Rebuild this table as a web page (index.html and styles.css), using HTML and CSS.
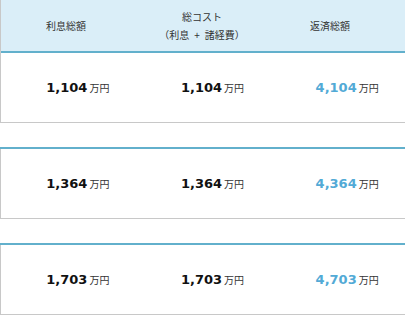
FILE: index.html
```html
<!DOCTYPE html>
<html lang="ja">
<head>
<meta charset="utf-8">
<link rel="stylesheet" href="styles.css">
</head>
<body>
<div class="wrap">
  <div class="block first">
    <div class="head">
      <div class="hcell">利息総額</div>
      <div class="hcell">総コスト<br>（利息<span class="plus">+</span>諸経費）</div>
      <div class="hcell">返済総額</div>
    </div>
    <div class="row">
      <div class="cell"><span class="num">1,104</span><span class="unit">万円</span></div>
      <div class="cell"><span class="num">1,104</span><span class="unit">万円</span></div>
      <div class="cell"><span class="num blue">4,104</span><span class="unit">万円</span></div>
    </div>
  </div>
  <div class="block">
    <div class="row">
      <div class="cell"><span class="num">1,364</span><span class="unit">万円</span></div>
      <div class="cell"><span class="num">1,364</span><span class="unit">万円</span></div>
      <div class="cell"><span class="num blue">4,364</span><span class="unit">万円</span></div>
    </div>
  </div>
  <div class="block">
    <div class="row">
      <div class="cell"><span class="num">1,703</span><span class="unit">万円</span></div>
      <div class="cell"><span class="num">1,703</span><span class="unit">万円</span></div>
      <div class="cell"><span class="num blue">4,703</span><span class="unit">万円</span></div>
    </div>
  </div>
</div>
</body>
</html>
```
FILE: styles.css
```css
html, body {
  margin: 0;
  padding: 0;
  background: #fff;
}
body {
  font-family: "Noto Sans CJK JP", "DejaVu Sans", sans-serif;
  color: #333;
}
.wrap {
  width: 405px;
  display: flex;
  flex-direction: column;
  gap: 24px;
}
.block {
  border-left: 1px solid #c8c8c8;
  border-bottom: 1px solid #c8c8c8;
}
.head {
  height: 51px;
  background: #daeef8;
  display: grid;
  grid-template-columns: 130px 142px 114px;
  padding-right: 18px;
  align-items: center;
}
.hcell {
  text-align: center;
  font-size: 10px;
  line-height: 18px;
  color: #333;
}
.plus {
  margin: 0 5px;
}
.row {
  border-top: 2px solid #62b0cc;
  height: 69px;
  display: grid;
  grid-template-columns: repeat(3, 1fr);
  align-items: center;
}
.block:not(.first) .row {
  margin-left: -1px;
  padding-left: 1px;
}
.cell {
  display: flex;
  justify-content: center;
  align-items: baseline;
  padding-left: 19px;
  gap: 2px;
}
.num {
  font-family: "DejaVu Sans", Verdana, sans-serif;
  font-weight: bold;
  font-size: 13px;
  color: #111;
}
.num.blue {
  color: #52aad6;
}
.unit {
  font-size: 10px;
  color: #333;
}
```
